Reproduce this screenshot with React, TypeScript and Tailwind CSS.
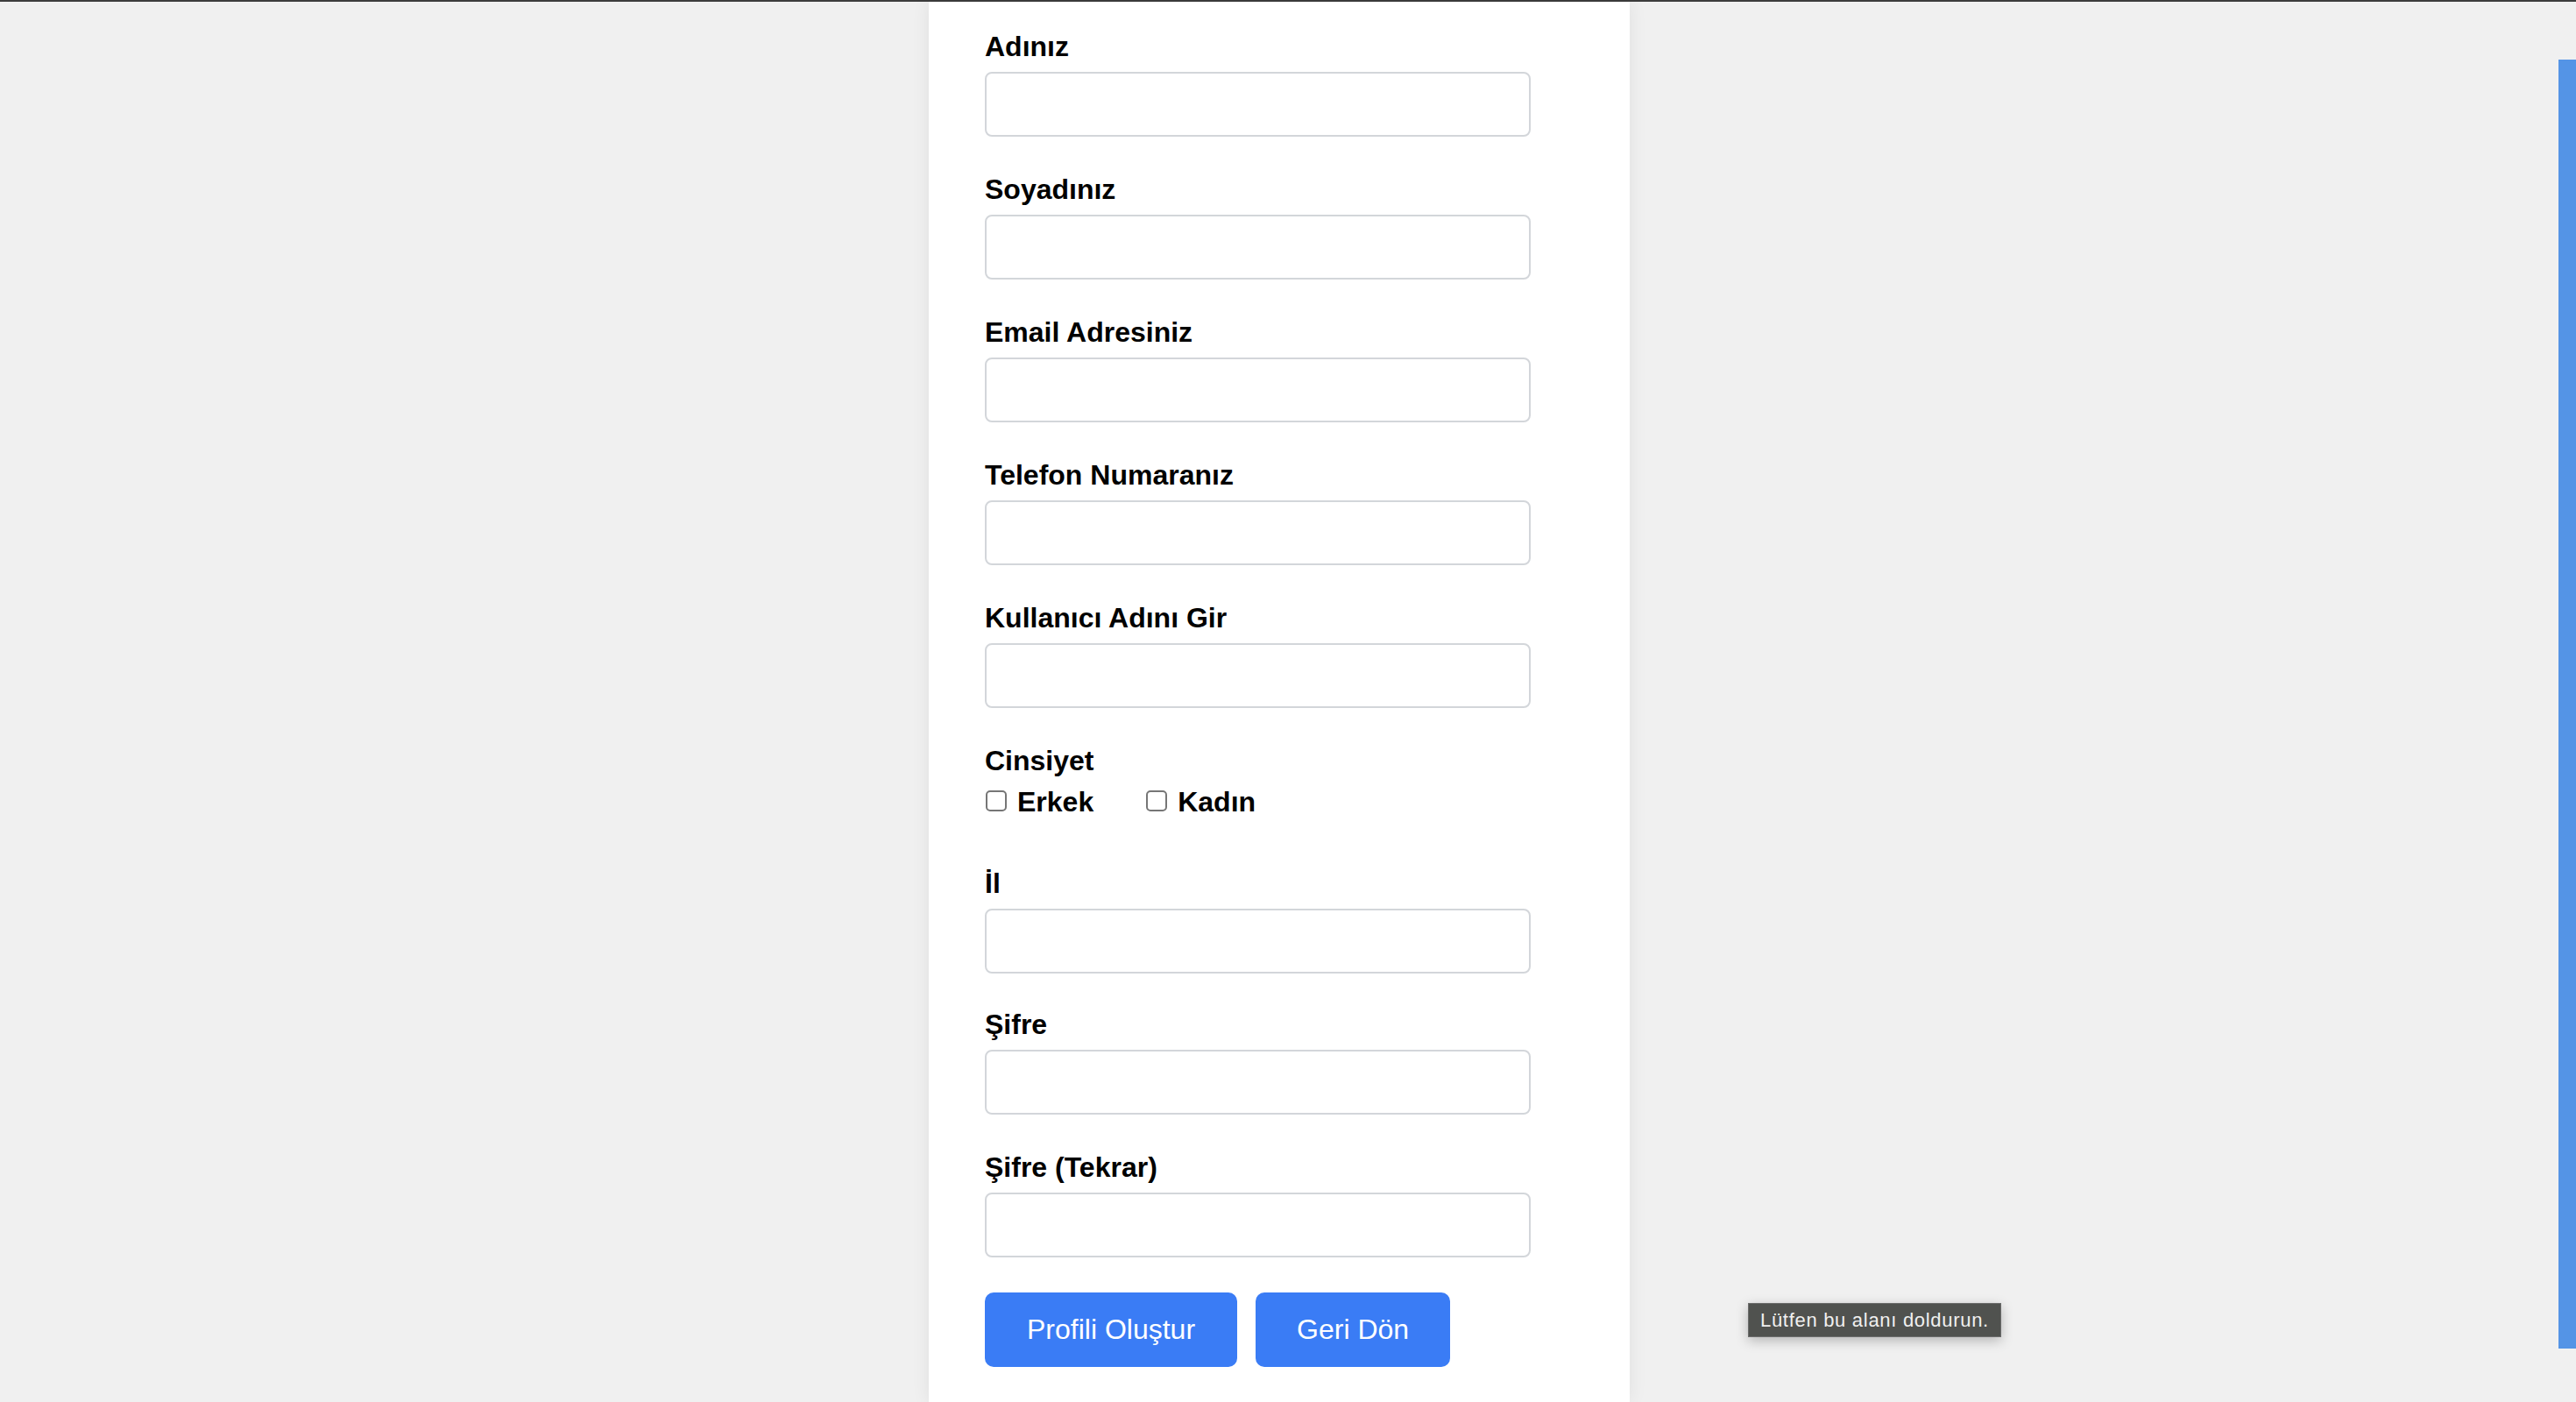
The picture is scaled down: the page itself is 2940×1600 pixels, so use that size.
const fields = [
  { id: 'ad', label: 'Adınız', type: 'text' },
  { id: 'soyad', label: 'Soyadınız', type: 'text' },
  { id: 'email', label: 'Email Adresiniz', type: 'email' },
  { id: 'telefon', label: 'Telefon Numaranız', type: 'tel' },
  { id: 'kullanici', label: 'Kullanıcı Adını Gir', type: 'text' },
]

const fieldsAfter = [
  { id: 'il', label: 'İl', type: 'text', mb: 'mb-[42px]' },
  { id: 'sifre', label: 'Şifre', type: 'password', mb: 'mb-[44px]' },
  { id: 'sifre2', label: 'Şifre (Tekrar)', type: 'password', mb: 'mb-[40px]' },
]

function Field({ id, label, type, mb = 'mb-[44px]' }: { id: string; label: string; type: string; mb?: string }) {
  return (
    <div className={mb}>
      <label htmlFor={id} className="block mb-[12px] text-[32px] leading-[33px] font-bold text-black">
        {label}
      </label>
      <input
        id={id}
        type={type}
        className="block w-[623px] h-[74px] rounded-[8px] border-2 border-[#d3d6da] bg-white px-[16px] text-[32px] outline-none"
      />
    </div>
  )
}

function Check({ id, label }: { id: string; label: string }) {
  return (
    <label htmlFor={id} className="flex items-center gap-[12px] text-[32px] leading-[37px] font-bold text-black">
      <input
        id={id}
        type="checkbox"
        className="appearance-none w-[24px] h-[24px] ml-[1px] mb-[4px] rounded-[5px] border-2 border-[#767676] bg-white"
      />
      {label}
    </label>
  )
}

export default function App() {
  return (
    <div className="relative h-[1600px] overflow-hidden bg-[#f0f0f0] flex flex-col font-['Liberation_Sans',Arial,sans-serif]">
      <div className="h-[2px] bg-[#3c3c3c]" />

      <div className="flex flex-1">
        <div className="flex-1 flex justify-center">
          <form className="w-[800px] bg-white shadow-[0_0_20px_rgba(0,0,0,0.07)] pl-[64px] pt-[35px]">
            {fields.map((f) => (
              <Field key={f.id} {...f} />
            ))}

            <div className="mb-[58px]">
              <div className="mb-[12px] text-[32px] leading-[33px] font-bold text-black">Cinsiyet</div>
              <div className="flex gap-[59px]">
                <Check id="erkek" label="Erkek" />
                <Check id="kadin" label="Kadın" />
              </div>
            </div>

            {fieldsAfter.map((f) => (
              <Field key={f.id} {...f} />
            ))}

            <div className="flex gap-[21px]">
              <button
                type="submit"
                className="rounded-[10px] bg-[#3a7cf5] px-[48px] py-[24px] text-[32px] leading-[37px] text-white"
              >
                Profili Oluştur
              </button>
              <button
                type="button"
                className="rounded-[10px] bg-[#3a7cf5] px-[47px] py-[24px] text-[32px] leading-[37px] text-white"
              >
                Geri Dön
              </button>
            </div>
          </form>
        </div>

        <div className="w-[20px]">
          <div className="mt-[66px] h-[1471px] bg-[#5494e6]" />
        </div>
      </div>

      <div className="absolute left-[1995px] top-[1487px] border border-[#6b6b6b] bg-[#50524f] px-[13px] text-[22px] leading-[37px] tracking-[0.7px] text-[#f0f0f0] shadow-[0_4px_14px_rgba(0,0,0,0.25)]">
        Lütfen bu alanı doldurun.
      </div>
    </div>
  )
}
